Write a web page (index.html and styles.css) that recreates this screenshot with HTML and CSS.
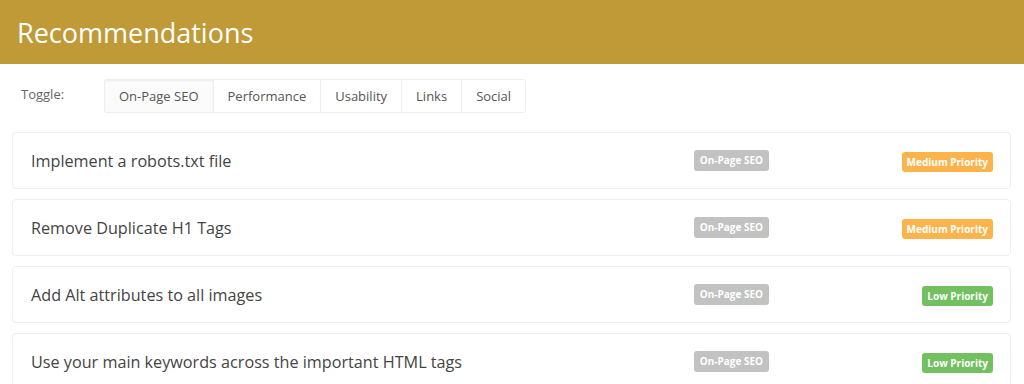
FILE: index.html
```html
<!DOCTYPE html>
<html lang="en">
<head>
  <meta charset="UTF-8">
  <meta name="viewport" content="width=device-width, initial-scale=1.0">
  <title>Recommendations</title>
  <link rel="stylesheet" href="styles.css">
</head>
<body>
  <div class="header">
    <h1>Recommendations</h1>
  </div>

  <div class="toggle-row">
    <span class="toggle-label">Toggle:</span>
    <div class="tabs">
      <button class="tab active">On-Page SEO</button>
      <button class="tab">Performance</button>
      <button class="tab">Usability</button>
      <button class="tab">Links</button>
      <button class="tab">Social</button>
    </div>
  </div>

  <ul class="recs">
    <li class="rec">
      <span class="rec-title">Implement a robots.txt file</span>
      <span class="badge category">On-Page SEO</span>
      <span class="priority-cell"><span class="badge medium">Medium Priority</span></span>
    </li>
    <li class="rec">
      <span class="rec-title">Remove Duplicate H1 Tags</span>
      <span class="badge category">On-Page SEO</span>
      <span class="priority-cell"><span class="badge medium">Medium Priority</span></span>
    </li>
    <li class="rec">
      <span class="rec-title">Add Alt attributes to all images</span>
      <span class="badge category">On-Page SEO</span>
      <span class="priority-cell"><span class="badge low">Low Priority</span></span>
    </li>
    <li class="rec">
      <span class="rec-title">Use your main keywords across the important HTML tags</span>
      <span class="badge category">On-Page SEO</span>
      <span class="priority-cell"><span class="badge low">Low Priority</span></span>
    </li>
  </ul>
</body>
</html>
```

FILE: styles.css
```css
* { box-sizing: border-box; }
body {
  font-family: 'Open Sans', 'Liberation Sans', sans-serif;
  background: #ffffff;
  margin: 0;
  padding: 0;
  color: #444;
}
.header {
  background: #bf9a37;
  height: 64px;
  padding: 0 17px;
  display: flex;
  align-items: center;
}
.header h1 {
  margin: 0;
  color: #fff;
  font-size: 27px;
  font-weight: 400;
}
.toggle-row {
  display: flex;
  align-items: flex-start;
  padding: 15px 0 0 21px;
}
.toggle-label {
  font-size: 13px;
  color: #666;
  width: 83px;
  padding-top: 6px;
}
.tabs {
  display: flex;
  border: 1px solid #eee;
  border-radius: 3px;
}
.tab {
  font-family: inherit;
  font-size: 13px;
  color: #555;
  background: #fff;
  border: none;
  border-left: 1px solid #eee;
  height: 32px;
  padding: 0 14px;
  cursor: pointer;
}
.tab:first-child { border-left: none; }
.tab.active {
  background: #fbfbfb;
  box-shadow: inset 0 1px 2px rgba(0,0,0,0.06);
}
.recs {
  list-style: none;
  margin: 19px 13px 0 12px;
  padding: 0;
  display: flex;
  flex-direction: column;
  gap: 10px;
}
.rec {
  display: flex;
  align-items: center;
  height: 57px;
  border: 1px solid #eee;
  border-radius: 4px;
  padding: 0 17px 0 18px;
  background: #fff;
}
.rec-title {
  flex: 1;
  font-size: 16.2px;
  color: #444;
}
.priority-cell {
  width: 224px;
  text-align: right;
}
.badge {
  display: inline-block;
  font-size: 10px;
  font-weight: 700;
  color: #fff;
  line-height: 21px;
  padding: 0 6px;
  border-radius: 3px;
}
.category { background: #c2c2c2; }
.medium, .low {
  line-height: 20px;
  padding: 0 5px;
}
.medium { background: #fbb44c; }
.low { background: #72c05f; }
```
